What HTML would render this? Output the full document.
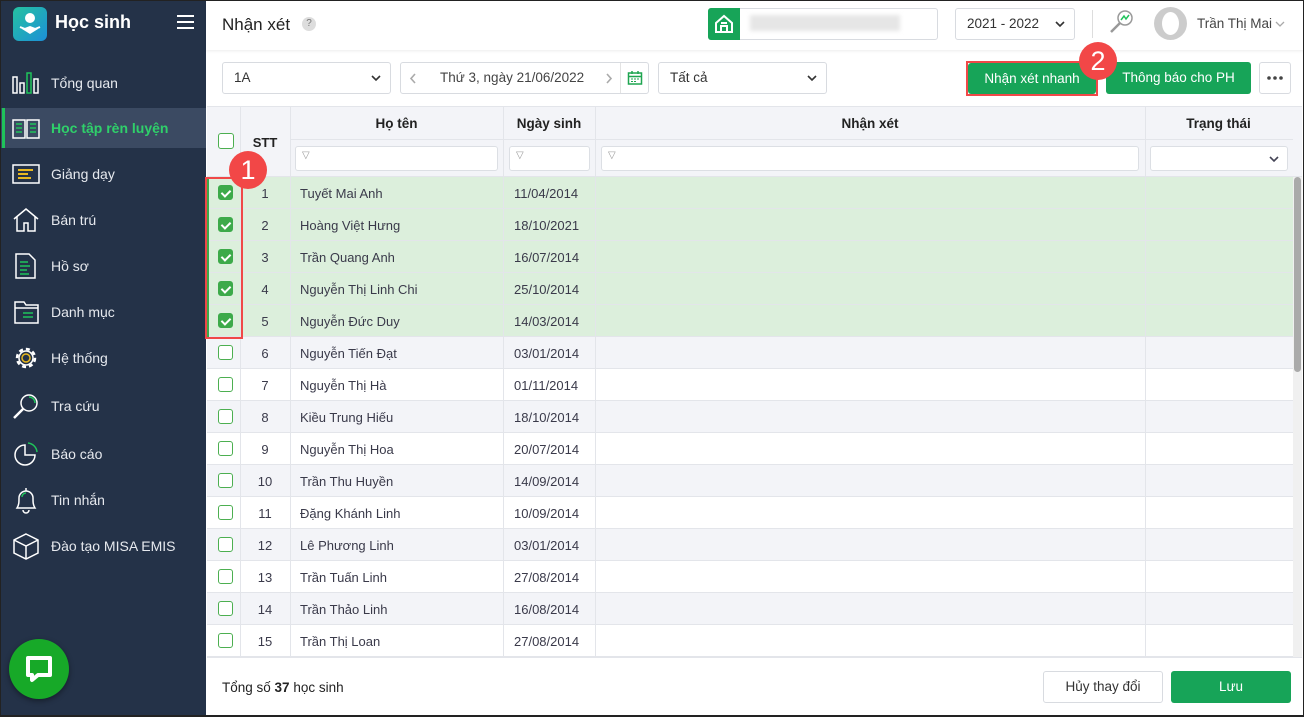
<!DOCTYPE html>
<html><head><meta charset="utf-8"><style>
*{box-sizing:border-box;margin:0;padding:0}
body{width:1304px;height:717px;overflow:hidden;font-family:"Liberation Sans",sans-serif;font-size:13px;color:#333;background:#fff;position:relative}
.abs{position:absolute}
#frame{position:absolute;left:0;top:0;width:1304px;height:717px;border:1px solid #222;z-index:50;pointer-events:none;border-bottom-width:2px}
.side{left:0;top:0;width:206px;height:717px;background:#243248}
.nav{position:absolute;left:0;width:206px;height:40px;color:#e6e9ee;font-size:14px}
.nav span{position:absolute;left:51px;top:12px}
.nav svg{position:absolute;left:11px;top:6px}
.active{background:#3b4a62}
.active::before{content:"";position:absolute;left:2px;top:0;width:3px;height:40px;background:#1fc35a}
.active span{color:#2fd06a;font-weight:bold}
.box{border:1px solid #d8dbe0;border-radius:3px;background:#fff}
.btn{background:#17a458;color:#fff;border-radius:3px;text-align:center;font-size:13.5px}
.row{position:absolute;left:207px;width:1086px;height:32px;border-bottom:1px solid #e3e5ea}
.cell{position:absolute;top:1px;height:32px;line-height:31px;font-size:13px;color:#3a3a4a}
.cb{position:absolute;left:11px;top:8px;width:15px;height:15px;border:1.5px solid #4caf50;border-radius:3px;background:#fff}
.cb.on{background:#3daa4a;border-color:#3daa4a}
.cb.on::after{content:"";position:absolute;left:3.5px;top:1.5px;width:4px;height:7px;border:solid #fff;border-width:0 2px 2px 0;transform:rotate(45deg)}
.vl{position:absolute;top:106px;width:1px;height:552px;background:#e3e5ea}
.filt{position:absolute;top:146px;height:25px;background:#fff;border:1px solid #dcdfe4;border-radius:3px}
.badge{position:absolute;width:38px;height:38px;border-radius:50%;background:#f24747;color:#fff;font-size:27px;text-align:center;line-height:38px;z-index:10}
.chev{position:absolute}
</style></head><body>
<div id="frame"></div>
<div class="abs side">
 <div class="abs" style="left:13px;top:7px;width:34px;height:34px;border-radius:6px;background:linear-gradient(135deg,#25c2a0,#1c8fd8)">
  <svg width="34" height="34" viewBox="0 0 34 34"><circle cx="17" cy="11" r="5" fill="#fff"/><path d="M9 22 L17 19 L25 22 L17 27Z" fill="#fff"/><path d="M7 20 L17 24 L27 20" stroke="#fff" stroke-width="2" fill="none"/></svg>
 </div>
 <div class="abs" style="left:55px;top:12px;color:#fff;font-size:18px;font-weight:bold">Học sinh</div>
 <div class="abs" style="left:177px;top:15px;width:17px;height:2px;background:#fff;box-shadow:0 6px 0 #fff,0 12px 0 #fff"></div>
 <div class="nav" style="top:63px"><svg width="30" height="28"><g stroke="#fff" stroke-width="1.5" fill="none"><rect x="2" y="8" width="4" height="16"/><rect x="9" y="14" width="4" height="10"/><rect x="23" y="10" width="4" height="14"/></g><rect x="16" y="4" width="4" height="20" fill="none" stroke="#1fc35a" stroke-width="1.5"/></svg><span>Tổng quan</span></div>
 <div class="nav active" style="top:108px"><svg width="30" height="28"><g stroke="#fff" stroke-width="1.5" fill="none"><path d="M2 6h12v18H2zM16 6h12v18H16z"/></g><g stroke="#1fc35a" stroke-width="1.5"><path d="M5 10h6M5 14h6M5 18h6M19 10h6M19 14h6M19 18h6"/></g></svg><span>Học tập rèn luyện</span></div>
 <div class="nav" style="top:154px"><svg width="30" height="28"><rect x="2" y="5" width="26" height="18" stroke="#fff" stroke-width="1.5" fill="none"/><path d="M7 10h15M7 14h10M7 18h13" stroke="#e8b820" stroke-width="2"/></svg><span>Giảng dạy</span></div>
 <div class="nav" style="top:200px"><svg width="30" height="28"><path d="M3 13L15 3L27 13M6 11v14h7v-8h4v8h7V11" stroke="#fff" stroke-width="1.5" fill="none"/></svg><span>Bán trú</span></div>
 <div class="nav" style="top:246px"><svg width="30" height="28"><path d="M5 2h13l6 6v18H5z" stroke="#fff" stroke-width="1.5" fill="none"/><path d="M9 10h8M9 14h10M9 18h7M9 22h9" stroke="#1fc35a" stroke-width="1.5"/></svg><span>Hồ sơ</span></div>
 <div class="nav" style="top:292px"><svg width="30" height="28"><path d="M4 4h9l2 3h12v18H4z M4 10h23" stroke="#fff" stroke-width="1.5" fill="none"/><path d="M12 15h10M12 19h10" stroke="#1fc35a" stroke-width="1.5"/></svg><span>Danh mục</span></div>
 <div class="nav" style="top:338px"><svg width="30" height="28"><circle cx="15" cy="14" r="9" stroke="#fff" stroke-width="2.5" stroke-dasharray="4 3" fill="none"/><circle cx="15" cy="14" r="7" stroke="#fff" stroke-width="1.5" fill="none"/><circle cx="15" cy="14" r="4" stroke="#e8b820" stroke-width="1.5" fill="none"/></svg><span>Hệ thống</span></div>
 <div class="nav" style="top:386px"><svg width="30" height="28"><circle cx="18" cy="11" r="8" stroke="#fff" stroke-width="1.5" fill="none"/><path d="M18 5a6 6 0 0 1 6 6" stroke="#1fc35a" stroke-width="1.5" fill="none"/><path d="M12 17L3 26" stroke="#fff" stroke-width="2.5"/></svg><span>Tra cứu</span></div>
 <div class="nav" style="top:434px"><svg width="30" height="28"><path d="M14 5a10 10 0 1 0 10 10H14z" stroke="#fff" stroke-width="1.5" fill="none"/><path d="M17 3a10 10 0 0 1 9 9" stroke="#1fc35a" stroke-width="1.5" fill="none"/></svg><span>Báo cáo</span></div>
 <div class="nav" style="top:480px"><svg width="30" height="28"><path d="M6 22c2-3 2-6 2-10a7 7 0 0 1 14 0c0 4 0 7 2 10zM12 24a3 3 0 0 0 6 0M15 2v3" stroke="#fff" stroke-width="1.5" fill="none"/><path d="M11 11a4 4 0 0 1 4-4" stroke="#1fc35a" stroke-width="1.5" fill="none"/></svg><span>Tin nhắn</span></div>
 <div class="nav" style="top:526px"><svg width="30" height="28"><path d="M15 2L27 8v13L15 27L3 21V8zM3 8l12 6l12-6M15 14v13" stroke="#fff" stroke-width="1.5" fill="none"/></svg><span>Đào tạo MISA EMIS</span></div>
 <div class="abs" style="left:9px;top:639px;width:60px;height:60px;border-radius:50%;background:#17a928;box-shadow:0 2px 6px rgba(0,0,0,.4)">
  <svg width="60" height="60"><path d="M19 19h22v17H29l-6 5v-5h-4z" stroke="#fff" stroke-width="4" fill="none" stroke-linejoin="round"/></svg>
 </div>
</div>
<!-- header -->
<div class="abs" style="left:206px;top:0;width:1098px;height:50px;background:#fff;box-shadow:0 1px 3px rgba(0,0,0,.08)"></div>
<div class="abs" style="left:222px;top:15px;font-size:17px;color:#222">Nhận xét</div>
<div class="abs" style="left:302px;top:17px;width:14px;height:14px;border-radius:50%;background:#ddd;color:#777;font-size:10px;text-align:center;line-height:14px">?</div>
<div class="abs box" style="left:708px;top:8px;width:230px;height:32px"></div>
<div class="abs" style="left:708px;top:8px;width:32px;height:32px;background:#17a458;border-radius:3px 0 0 3px"><svg width="32" height="32"><path d="M8 15L16 8l8 7v9H8zM13 24v-6h6v6M13 15h6" stroke="#fff" stroke-width="2" fill="none"/></svg></div>
<div class="abs" style="left:750px;top:15px;width:150px;height:16px;background:#e6e6e6;filter:blur(2px)"></div>
<div class="abs box" style="left:955px;top:8px;width:120px;height:32px;font-size:13.5px;line-height:30px;padding-left:11px">2021 - 2022<svg class="chev" style="right:9px;top:11px" width="10" height="8"><path d="M1 2l4 4 4-4" stroke="#333" stroke-width="1.6" fill="none"/></svg></div>
<div class="abs" style="left:1092px;top:10px;width:1px;height:28px;background:#ddd"></div>
<svg class="abs" style="left:1106px;top:6px" width="30" height="30"><circle cx="19" cy="12" r="7" stroke="#999" stroke-width="1.5" fill="#fff"/><path d="M15 14l3-4 2 3 3-4" stroke="#1fc35a" stroke-width="1.5" fill="none"/><path d="M14 17L5 26" stroke="#999" stroke-width="2.5"/></svg>
<div class="abs" style="left:1154px;top:7px;width:33px;height:33px;border-radius:50%;background:#ccc"><div style="position:absolute;left:8px;top:5px;width:17px;height:23px;border-radius:50%;background:#fff"></div></div>
<div class="abs" style="left:1197px;top:16px;font-size:13.5px;color:#444">Trần Thị Mai</div>
<svg class="abs" style="left:1275px;top:20px" width="10" height="8"><path d="M1 2l4 4 4-4" stroke="#aaa" stroke-width="1.3" fill="none"/></svg>
<!-- toolbar -->
<div class="abs box" style="left:222px;top:62px;width:169px;height:32px;line-height:30px;padding-left:11px;font-size:13.5px">1A<svg class="chev" style="right:9px;top:11px" width="10" height="8"><path d="M1 2l4 4 4-4" stroke="#333" stroke-width="1.6" fill="none"/></svg></div>
<div class="abs box" style="left:400px;top:62px;width:249px;height:32px;line-height:30px;font-size:13.5px;color:#444">
 <svg class="chev" style="left:8px;top:10px" width="8" height="11"><path d="M6 1L2 5.5 6 10" stroke="#aaa" stroke-width="1.6" fill="none"/></svg><span style="position:absolute;left:39px">Thứ 3, ngày 21/06/2022</span><svg class="chev" style="left:204px;top:10px" width="8" height="11"><path d="M2 1l4 4.5L2 10" stroke="#aaa" stroke-width="1.6" fill="none"/></svg>
 <div style="position:absolute;left:219px;top:0;width:1px;height:30px;background:#e3e3e3"></div>
 <svg style="position:absolute;left:226px;top:7px" width="16" height="16"><rect x="1.5" y="3" width="13" height="11" stroke="#1fa550" stroke-width="1.5" fill="none"/><path d="M1.5 6.5h13M5 1v3M11 1v3" stroke="#1fa550" stroke-width="1.5"/><path d="M4 9h2M7 9h2M10 9h2M4 11.5h2M7 11.5h2" stroke="#1fa550"/></svg>
</div>
<div class="abs box" style="left:658px;top:62px;width:169px;height:32px;line-height:30px;padding-left:11px;font-size:13.5px">Tất cả<svg class="chev" style="right:9px;top:11px" width="10" height="8"><path d="M1 2l4 4 4-4" stroke="#333" stroke-width="1.6" fill="none"/></svg></div>
<div class="abs" style="left:966px;top:61px;width:132px;height:35px;border:2px solid #f04848"></div>
<div class="abs btn" style="left:968px;top:63px;width:128px;height:31px;line-height:31px">Nhận xét nhanh</div>
<div class="abs btn" style="left:1106px;top:62px;width:145px;height:32px;line-height:32px">Thông báo cho PH</div>
<div class="abs box" style="left:1259px;top:62px;width:32px;height:32px"><svg width="30" height="30"><circle cx="9" cy="15" r="1.8" fill="#444"/><circle cx="15" cy="15" r="1.8" fill="#444"/><circle cx="21" cy="15" r="1.8" fill="#444"/></svg></div>
<div class="badge" style="left:1079px;top:42px">2</div>
<!-- table header -->
<div class="abs" style="left:207px;top:106px;width:1095px;height:71px;background:#f3f4f8;border-top:1px solid #e3e5ea;border-bottom:1px solid #e3e5ea"></div>
<div class="abs" style="left:290px;top:139px;width:1003px;height:1px;background:#e3e5ea"></div>
<div class="abs" style="left:218px;top:133px;width:16px;height:16px;border:1.5px solid #4caf50;border-radius:3px;background:#fff"></div>
<div class="abs" style="left:240px;top:135px;width:50px;text-align:center;font-weight:bold;font-size:13px;color:#222">STT</div>
<div class="abs" style="left:290px;top:116px;width:213px;text-align:center;font-weight:bold;font-size:13.5px;color:#222">Họ tên</div>
<div class="abs" style="left:503px;top:116px;width:92px;text-align:center;font-weight:bold;font-size:13.5px;color:#222">Ngày sinh</div>
<div class="abs" style="left:595px;top:116px;width:550px;text-align:center;font-weight:bold;font-size:13.5px;color:#222">Nhận xét</div>
<div class="abs" style="left:1145px;top:116px;width:147px;text-align:center;font-weight:bold;font-size:13.5px;color:#222">Trạng thái</div>
<div class="filt" style="left:295px;width:203px"><span style="position:absolute;left:6px;top:3px;font-size:10px;color:#999">&#x25BD;</span></div>
<div class="filt" style="left:509px;width:81px"><span style="position:absolute;left:6px;top:3px;font-size:10px;color:#999">&#x25BD;</span></div>
<div class="filt" style="left:601px;width:538px"><span style="position:absolute;left:6px;top:3px;font-size:10px;color:#999">&#x25BD;</span></div>
<div class="filt" style="left:1150px;width:138px"><svg class="chev" style="right:8px;top:8px" width="10" height="8"><path d="M1 2l4 4 4-4" stroke="#445" stroke-width="1.6" fill="none"/></svg></div>
<!-- rows -->
<div id="rows"></div>
<div class="vl" style="left:240px"></div><div class="vl" style="left:290px"></div><div class="vl" style="left:503px"></div><div class="vl" style="left:595px"></div><div class="vl" style="left:1145px"></div>
<div class="abs" style="left:1293px;top:177px;width:9px;height:481px;background:#f0f0f0"></div>
<div class="abs" style="left:1294px;top:177px;width:7px;height:195px;background:#aaa;border-radius:4px"></div>
<div class="abs" style="left:205px;top:177px;width:38px;height:162px;border:2px solid #f04848;z-index:5"></div>
<div class="badge" style="left:229px;top:151px">1</div>
<!-- footer -->
<div class="abs" style="left:207px;top:657px;width:1095px;height:1px;background:#e3e5ea"></div>
<div class="abs" style="left:222px;top:680px;font-size:13.5px;color:#222">Tổng số <b>37</b> học sinh</div>
<div class="abs box" style="left:1043px;top:671px;width:120px;height:32px;line-height:30px;text-align:center;font-size:13.5px;color:#333">Hủy thay đổi</div>
<div class="abs btn" style="left:1171px;top:671px;width:120px;height:32px;line-height:32px">Lưu</div>
<script>
var d=[["Tuyết Mai Anh","11/04/2014"],["Hoàng Việt Hưng","18/10/2021"],["Trần Quang Anh","16/07/2014"],["Nguyễn Thị Linh Chi","25/10/2014"],["Nguyễn Đức Duy","14/03/2014"],["Nguyễn Tiến Đạt","03/01/2014"],["Nguyễn Thị Hà","01/11/2014"],["Kiều Trung Hiếu","18/10/2014"],["Nguyễn Thị Hoa","20/07/2014"],["Trần Thu Huyền","14/09/2014"],["Đặng Khánh Linh","10/09/2014"],["Lê Phương Linh","03/01/2014"],["Trần Tuấn Linh","27/08/2014"],["Trần Thảo Linh","16/08/2014"],["Trần Thị Loan","27/08/2014"]];
var h="";d.forEach(function(r,i){var n=i+1,sel=n<=5,bg=sel?"#dcefdc":(n%2==0?"#f3f4f8":"#fff");
h+='<div class="row" style="top:'+(177+32*i)+'px;background:'+bg+'">'+(sel?'<div style="position:absolute;left:0;top:0;width:2px;height:32px;background:#3daa4a"></div>':'')+'<div class="cb'+(sel?' on':'')+'"></div><div class="cell" style="left:33px;width:50px;text-align:center">'+n+'</div><div class="cell" style="left:93px">'+r[0]+'</div><div class="cell" style="left:307px">'+r[1]+'</div></div>';});
document.getElementById("rows").innerHTML=h;
</script>
</body></html>
